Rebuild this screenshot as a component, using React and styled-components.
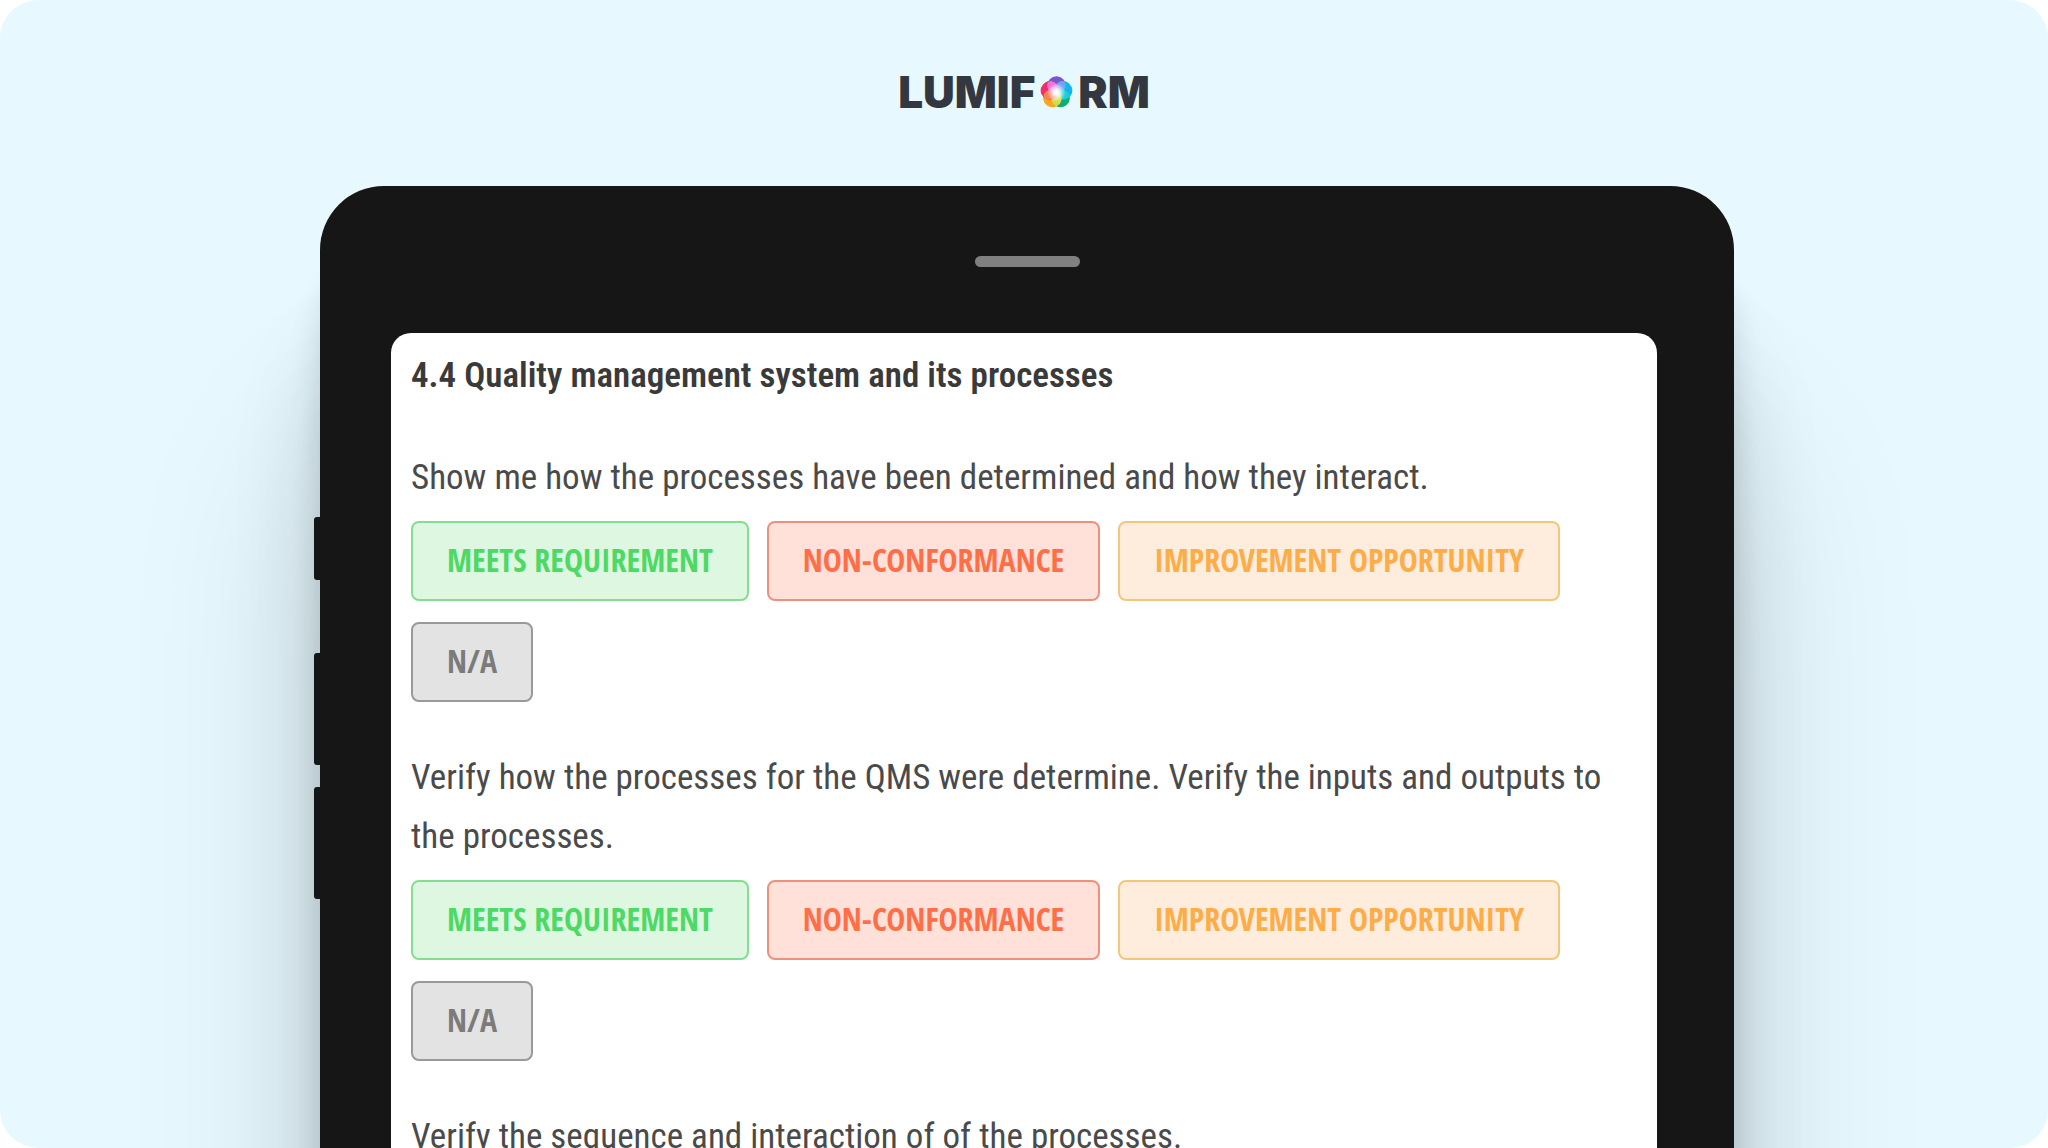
import React from "react";
import styled, { createGlobalStyle } from "styled-components";

const questions = [
  {
    id: "interaction",
    text: "Show me how the processes have been determined and how they interact.",
  },
  {
    id: "inputs",
    text: "Verify how the processes for the QMS were determine. Verify the inputs and outputs to the processes.",
  },
  {
    id: "sequence",
    text: "Verify the sequence and interaction of of the processes.",
  },
];

const answers = [
  { label: "MEETS REQUIREMENT", tone: "green" },
  { label: "NON-CONFORMANCE", tone: "red" },
  { label: "IMPROVEMENT OPPORTUNITY", tone: "orange" },
  { label: "N/A", tone: "grey" },
];

const tones = {
  green: { text: "#4cd964", fill: "#ddf7e0", border: "#84dd93" },
  red: { text: "#ff6f47", fill: "#ffe1da", border: "#ee917c" },
  orange: { text: "#fcad47", fill: "#feecdc", border: "#f3c67c" },
  grey: { text: "#7b7b7b", fill: "#e3e3e3", border: "#999999" },
};

const petals = [
  { color: "#7b57c9", angle: 0 },
  { color: "#0fb5f5", angle: 72 },
  { color: "#10ad72", angle: 144 },
  { color: "#fba61c", angle: 216 },
  { color: "#ee2f6b", angle: 288 },
];

const overlaps = [
  { color: "#6fa4f2", angle: 36 },
  { color: "#18d0d8", angle: 108 },
  { color: "#d3dc4e", angle: 180 },
  { color: "#f98353", angle: 252 },
  { color: "#ee74dc", angle: 324 },
];

const Flower = () => (
  <svg width="33" height="33" viewBox="-50 -50 100 100" aria-hidden="true">
    <defs>
      <radialGradient id="glow">
        <stop offset="0" stopColor="#fff" />
        <stop offset="0.3" stopColor="#fff" stopOpacity="0.9" />
        <stop offset="1" stopColor="#fff" stopOpacity="0" />
      </radialGradient>
    </defs>
    {petals.map((p) => (
      <circle key={p.angle} cy="-21" r="28" fill={p.color} transform={`rotate(${p.angle})`} />
    ))}
    {overlaps.map((p) => (
      <ellipse key={p.angle} cy="-18" rx="15" ry="22" fill={p.color} transform={`rotate(${p.angle})`} />
    ))}
    <circle r="28" fill="url(#glow)" />
  </svg>
);

const App = () => {
  return (
    <>
      <GlobalStyle />
      <Page>
        <Logo href="#" aria-label="Lumiform">
          <span>LUMIF</span>
          <Flower />
          <span>RM</span>
        </Logo>
        <Stage>
          <Keys>
            <Key $short />
            <Key $first />
            <Key />
          </Keys>
          <Tablet>
            <Speaker />
            <Screen>
              <Title>4.4 Quality management system and its processes</Title>
              {questions.map((q) => (
                <Question key={q.id}>
                  <QuestionText id={q.id}>{q.text}</QuestionText>
                  <Answers role="group" aria-labelledby={q.id}>
                    {answers.map((a) => (
                      <Answer key={a.label} type="button" $tone={tones[a.tone]}>
                        {a.label}
                      </Answer>
                    ))}
                  </Answers>
                </Question>
              ))}
            </Screen>
          </Tablet>
        </Stage>
      </Page>
    </>
  );
};

export default App;

const GlobalStyle = createGlobalStyle`
  * {
    box-sizing: border-box;
  }
  body {
    margin: 0;
    background: #ffffff;
  }
`;

const Page = styled.main`
  height: 100vh;
  display: flex;
  flex-direction: column;
  overflow: hidden;
  background: #e7f9ff;
  border-radius: 38px;
`;

const Logo = styled.a`
  display: flex;
  align-items: center;
  align-self: center;
  gap: 5px;
  margin: 65px 0 67px;
  color: #333840;
  font-family: Inter, sans-serif;
  font-size: 44px;
  font-weight: 900;
  line-height: 54px;
  text-decoration: none;
`;

const Stage = styled.div`
  flex: 1;
  display: grid;
  grid-template-columns: 320px 1fr 314px;
`;

const Keys = styled.div`
  position: relative;
  z-index: 1;
  display: flex;
  flex-direction: column;
  align-items: flex-end;
  gap: 22px;
  padding-top: 331px;
`;

const Key = styled.span`
  width: 6px;
  height: ${(p) => (p.$short ? 63 : 112)}px;
  margin-top: ${(p) => (p.$first ? 51 : 0)}px;
  background: #131616;
  border-radius: 3px 0 0 3px;
`;

const Tablet = styled.div`
  display: flex;
  flex-direction: column;
  padding: 70px 77px 0 71px;
  background: #161616;
  border-radius: 64px 64px 0 0;
  box-shadow:
    0 80px 30px rgba(0, 0, 0, 0.12),
    0 160px 90px rgba(0, 0, 0, 0.14),
    0 260px 200px rgba(0, 0, 0, 0.14);
`;

const Speaker = styled.div`
  align-self: center;
  width: 105px;
  height: 11px;
  margin: 0 0 66px 6px;
  background: #808080;
  border-radius: 6px;
`;

const Screen = styled.section`
  flex: 1;
  padding: 13px 20px 0;
  background: #ffffff;
  border-radius: 20px 20px 0 0;
  color: #3a3a3a;
  font-family: "Roboto Condensed", Roboto, sans-serif;
  font-size: 35px;
  line-height: 59px;
`;

const Title = styled.h1`
  margin: 0 0 43px;
  font-size: 35px;
  font-weight: 600;
`;

const Question = styled.div`
  margin-bottom: 46px;
`;

const QuestionText = styled.p`
  margin: 0 0 14px;
  color: #4a4a4a;
  font-weight: 400;
`;

const Answers = styled.div`
  display: flex;
  flex-wrap: wrap;
  gap: 21px 18px;
`;

const Answer = styled.button`
  height: 80px;
  padding: 0 34px 2px;
  color: ${(p) => p.$tone.text};
  background: ${(p) => p.$tone.fill};
  border: 2px solid ${(p) => p.$tone.border};
  border-radius: 8px;
  font-family: "Open Sans Condensed", "Open Sans", sans-serif;
  font-size: 32px;
  font-weight: 700;
  line-height: 40px;
  cursor: pointer;
`;
